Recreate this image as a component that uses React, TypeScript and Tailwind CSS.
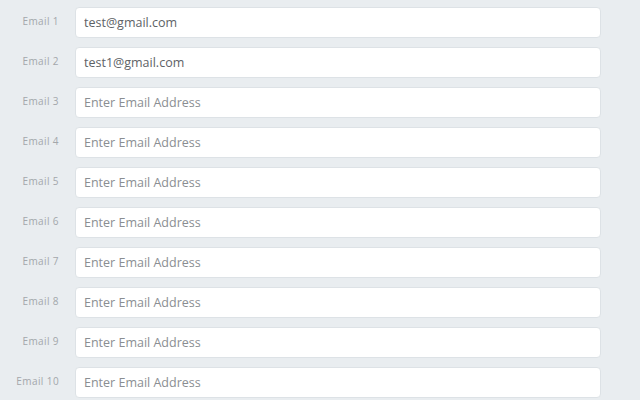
import React from "react";

const rows: { label: string; value: string }[] = [
  { label: "Email 1", value: "test@gmail.com" },
  { label: "Email 2", value: "test1@gmail.com" },
  { label: "Email 3", value: "" },
  { label: "Email 4", value: "" },
  { label: "Email 5", value: "" },
  { label: "Email 6", value: "" },
  { label: "Email 7", value: "" },
  { label: "Email 8", value: "" },
  { label: "Email 9", value: "" },
  { label: "Email 10", value: "" },
];

export default function App() {
  return (
    <div
      className="w-[640px] h-[400px] overflow-hidden bg-[#e9edf0] pt-[7px] flex flex-col gap-[9px]"
      style={{ fontFamily: '"Open Sans", "Liberation Sans", sans-serif' }}
    >
      {rows.map((r) => (
        <div key={r.label} className="flex items-center h-[31px] shrink-0">
          <div className="w-[75px] pr-[16px] text-right text-[10px] tracking-[0.4px] text-[#a3a7ab] leading-none -mt-[3px]">
            {r.label}
          </div>
          <input
            readOnly
            value={r.value}
            placeholder="Enter Email Address"
            className="w-[526px] h-[31px] bg-white border border-[#dde2e6] rounded-[4px] px-[8px] text-[12.5px] text-[#5e6266] placeholder:text-[#8a8e92] outline-none"
            style={{ fontFamily: '"Open Sans", "Liberation Sans", sans-serif' }}
          />
        </div>
      ))}
    </div>
  );
}
